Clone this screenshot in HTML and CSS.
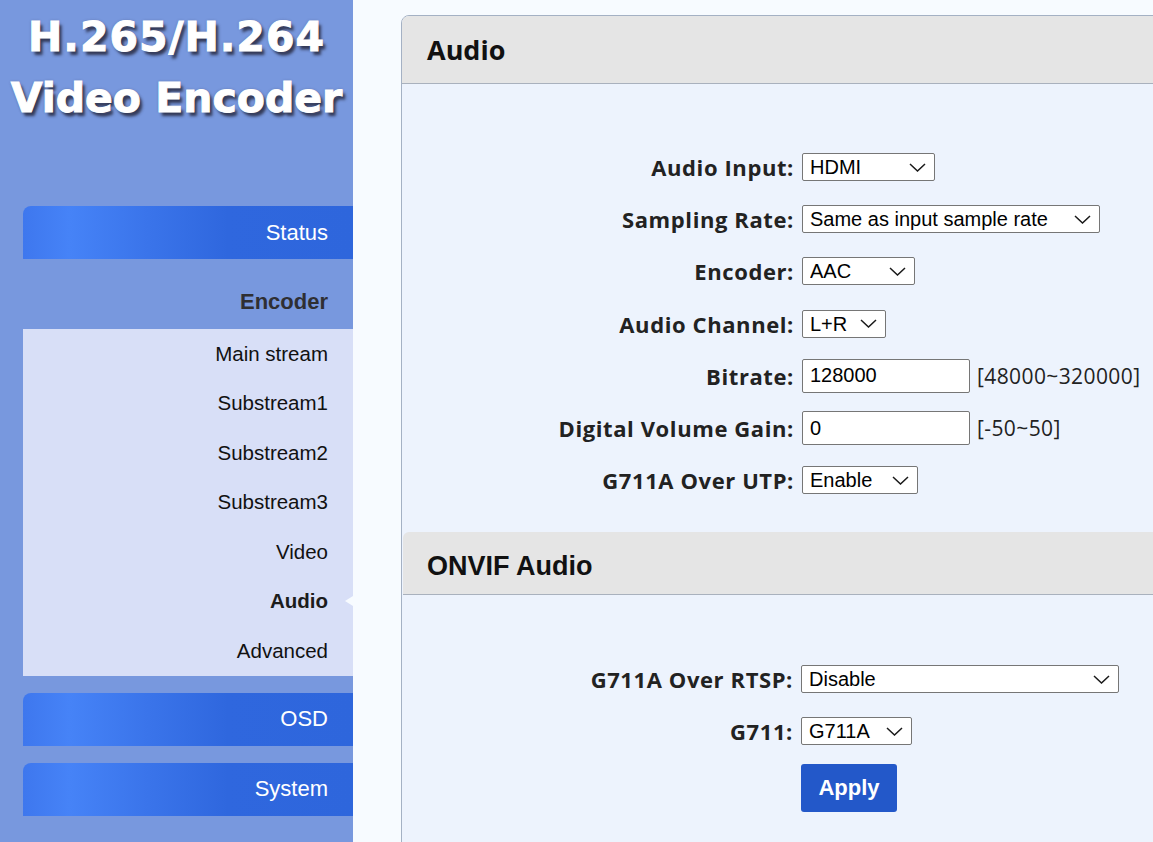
FILE: index.html
```html
<!DOCTYPE html>
<html lang="en">
<head>
<meta charset="utf-8">
<title>H.265/H.264 Video Encoder - Audio</title>
<link rel="stylesheet" href="styles.css">
</head>
<body>
<div class="app">
  <aside class="sidebar">
    <div class="logo">
      <div class="logo-line logo-line-top">H.265/H.264</div>
      <div class="logo-line">Video Encoder</div>
    </div>
    <nav class="nav">
      <a class="nav-main" href="#">Status</a>
      <div class="nav-heading">Encoder</div>
      <ul class="submenu">
        <li class="sub-item">Main stream</li>
        <li class="sub-item">Substream1</li>
        <li class="sub-item">Substream2</li>
        <li class="sub-item">Substream3</li>
        <li class="sub-item">Video</li>
        <li class="sub-item active">Audio</li>
        <li class="sub-item">Advanced</li>
      </ul>
      <a class="nav-main nav-gap" href="#">OSD</a>
      <a class="nav-main nav-gap" href="#">System</a>
    </nav>
  </aside>

  <main class="content">
    <div class="panel">
      <section class="section">
        <h2 class="section-head">Audio</h2>
        <div class="form form-audio">
          <label class="field-label">Audio Input:</label>
          <div class="ctrl">
            <span class="select sel-hdmi"><select><option>HDMI</option></select><svg class="chev" viewBox="0 0 17 9"><polyline points="1,1 8.5,8 16,1"/></svg></span>
          </div>

          <label class="field-label">Sampling Rate:</label>
          <div class="ctrl">
            <span class="select sel-rate"><select><option>Same as input sample rate</option></select><svg class="chev" viewBox="0 0 17 9"><polyline points="1,1 8.5,8 16,1"/></svg></span>
          </div>

          <label class="field-label">Encoder:</label>
          <div class="ctrl">
            <span class="select sel-enc"><select><option>AAC</option></select><svg class="chev" viewBox="0 0 17 9"><polyline points="1,1 8.5,8 16,1"/></svg></span>
          </div>

          <label class="field-label">Audio Channel:</label>
          <div class="ctrl">
            <span class="select sel-chan"><select><option>L+R</option></select><svg class="chev" viewBox="0 0 17 9"><polyline points="1,1 8.5,8 16,1"/></svg></span>
          </div>

          <label class="field-label">Bitrate:</label>
          <div class="ctrl">
            <input class="text-input" type="text" value="128000">
            <span class="range">[48000~320000]</span>
          </div>

          <label class="field-label">Digital Volume Gain:</label>
          <div class="ctrl">
            <input class="text-input" type="text" value="0">
            <span class="range">[-50~50]</span>
          </div>

          <label class="field-label">G711A Over UTP:</label>
          <div class="ctrl">
            <span class="select sel-utp"><select><option>Enable</option></select><svg class="chev" viewBox="0 0 17 9"><polyline points="1,1 8.5,8 16,1"/></svg></span>
          </div>
        </div>
      </section>

      <section class="section section-onvif">
        <h2 class="section-head section-head-alt">ONVIF Audio</h2>
        <div class="form form-onvif">
          <label class="field-label">G711A Over RTSP:</label>
          <div class="ctrl">
            <span class="select sel-rtsp"><select><option>Disable</option></select><svg class="chev" viewBox="0 0 17 9"><polyline points="1,1 8.5,8 16,1"/></svg></span>
          </div>

          <label class="field-label">G711:</label>
          <div class="ctrl">
            <span class="select sel-g711"><select><option>G711A</option></select><svg class="chev" viewBox="0 0 17 9"><polyline points="1,1 8.5,8 16,1"/></svg></span>
          </div>

          <div class="form-actions">
            <button class="btn-apply" type="button">Apply</button>
          </div>
        </div>
      </section>
    </div>
  </main>
</div>
</body>
</html>
```

FILE: styles.css
```css
html, body {
  margin: 0;
  height: 100%;
}

body {
  overflow: hidden;
  background: #f7fbff;
  font-family: "Liberation Sans", Arial, sans-serif;
}

.app {
  display: flex;
  height: 100vh;
}

/* ---------- Sidebar ---------- */
.sidebar {
  width: 353px;
  flex: none;
  background: #7898de;
  display: flex;
  flex-direction: column;
}

.logo {
  height: 206px;
  box-sizing: border-box;
  padding-top: 7px;
  text-align: center;
  font-family: "DejaVu Sans", sans-serif;
  font-weight: bold;
  font-size: 41px;
  line-height: 61px;
  color: #fff;
  white-space: nowrap;
  -webkit-text-stroke: 1px #fff;
  text-shadow: 3px 4px 3px rgba(35, 35, 55, 0.8), 0 0 3px rgba(60, 60, 90, 0.45);
}

.logo-line-top {
  letter-spacing: 1px;
}

.nav {
  display: flex;
  flex-direction: column;
  padding-left: 23px;
}

.nav-main {
  height: 53px;
  display: flex;
  align-items: center;
  justify-content: flex-end;
  padding-right: 25px;
  color: #fff;
  font-size: 22px;
  text-decoration: none;
  border-radius: 8px 0 0 0;
  background: linear-gradient(90deg, #3e77ee 0%, #4683f7 14%, #3a74ea 38%, #2f67de 62%, #2e66dc 100%);
}

.nav-gap {
  margin-top: 17px;
}

.nav-heading {
  height: 70px;
  box-sizing: border-box;
  padding: 30px 25px 0 0;
  line-height: 25px;
  text-align: right;
  font-weight: bold;
  font-size: 22px;
  color: #2f2f33;
}

.submenu {
  list-style: none;
  margin: 0;
  padding: 0;
  background: #d8dff7;
}

.sub-item {
  position: relative;
  height: 49.5px;
  display: flex;
  align-items: center;
  justify-content: flex-end;
  padding-right: 25px;
  font-size: 20.5px;
  color: #111;
}

.sub-item.active {
  font-weight: bold;
  color: #1c1c1c;
}

.sub-item.active::after {
  content: "";
  position: absolute;
  right: 0;
  top: 50%;
  margin-top: -5px;
  border-style: solid;
  border-width: 5px 8px 5px 0;
  border-color: transparent #f7fbff transparent transparent;
}

/* ---------- Content ---------- */
.content {
  flex: 1;
  min-width: 0;
  overflow: hidden;
  padding: 15px 0 0 48px;
}

.panel {
  width: 820px;
  min-height: 900px;
  border: 1px solid #a4b1c4;
  border-radius: 8px 0 0 0;
  background: #edf3fd;
  overflow: hidden;
}

.section-head {
  margin: 0;
  height: 67px;
  display: flex;
  align-items: center;
  padding-left: 25px;
  background: #e5e5e5;
  border-bottom: 1px solid #a9b1bd;
  font-family: "Open Sans", sans-serif;
  font-weight: 700;
  font-size: 27px;
  color: #111;
}

.section-head-alt {
  height: 63px;
  box-sizing: border-box;
  margin-left: 1px;
  padding: 6px 0 0 24px;
  border-top-left-radius: 6px;
  font-family: "Liberation Sans", Arial, sans-serif;
  font-size: 27px;
}

.form {
  display: grid;
  grid-template-columns: 392px 1fr;
  column-gap: 8px;
  align-items: center;
}

.form-audio {
  grid-template-rows: repeat(7, 52.2px);
  padding: 57px 0 26px;
}

.form-onvif {
  grid-template-columns: 391px 1fr;
  grid-template-rows: repeat(2, 52px) auto;
  padding: 58px 0 30px;
}

.field-label {
  font-family: "Open Sans", sans-serif;
  font-weight: 700;
  font-size: 22px;
  letter-spacing: 0.6px;
  color: #222;
  text-align: right;
  white-space: nowrap;
}

.ctrl {
  justify-self: start;
  display: flex;
  align-items: center;
  gap: 7px;
}

.select {
  display: inline-flex;
  align-items: center;
  height: 28px;
  box-sizing: border-box;
  border: 1px solid #767676;
  border-radius: 2px;
  background: #fff;
}

.select select {
  -webkit-appearance: none;
  appearance: none;
  flex: 1;
  min-width: 0;
  height: 100%;
  border: 0;
  outline: none;
  background: transparent;
  padding: 0 0 0 7px;
  font-family: "Liberation Sans", Arial, sans-serif;
  font-size: 20px;
  color: #000;
}

.chev {
  flex: none;
  width: 17px;
  height: 9px;
  margin-right: 8px;
  fill: none;
  stroke: #1a1a1a;
  stroke-width: 1.5;
}

.sel-hdmi { width: 133px; }
.sel-rate { width: 298px; }
.sel-enc  { width: 113px; }
.sel-chan { width: 84px; }
.sel-utp  { width: 116px; }
.sel-rtsp { width: 318px; }
.sel-g711 { width: 111px; }

.text-input {
  width: 168px;
  height: 34px;
  box-sizing: border-box;
  border: 1px solid #767676;
  border-radius: 2px;
  background: #fff;
  padding: 0 7px;
  font-family: "Liberation Sans", Arial, sans-serif;
  font-size: 20px;
  color: #000;
}

.range {
  font-family: "Open Sans", sans-serif;
  font-size: 21px;
  letter-spacing: 0.4px;
  color: #222;
}

.form-actions {
  grid-column: 2;
  align-self: start;
  margin-top: 7px;
}

.btn-apply {
  width: 96px;
  height: 48px;
  border: 0;
  border-radius: 3px;
  background: #2358c9;
  color: #fff;
  font-family: "Liberation Sans", Arial, sans-serif;
  font-weight: bold;
  font-size: 22px;
  cursor: pointer;
}
```
